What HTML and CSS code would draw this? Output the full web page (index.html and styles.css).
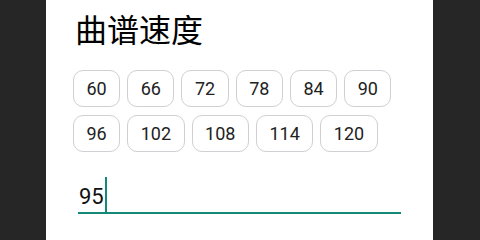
FILE: index.html
```html
<!DOCTYPE html>
<html lang="zh">
<head>
  <meta charset="UTF-8">
  <title>曲谱速度</title>
  <link rel="stylesheet" href="styles.css">
</head>
<body>

<div class="panel">
  <h2 class="title">曲谱速度</h2>

  <div class="speeds">
    <button class="speed">60</button>
    <button class="speed">66</button>
    <button class="speed">72</button>
    <button class="speed">78</button>
    <button class="speed">84</button>
    <button class="speed">90</button>
    <button class="speed">96</button>
    <button class="speed">102</button>
    <button class="speed">108</button>
    <button class="speed">114</button>
    <button class="speed">120</button>
  </div>

  <div class="field">
    <span class="value">95</span><span class="caret"></span>
  </div>
</div>

</body>
</html>
```

FILE: styles.css
```css
:root {
  --dark-bg: #262626;
  --accent: #138a78;
  --border-color: #cfcfd4;
  --text-color: #222;
}

body {
  margin: 0;
  background-color: var(--dark-bg);
  font-family: Roboto, "Noto Sans CJK SC", sans-serif;
  color: var(--text-color);
}

.panel {
  margin-left: 46px;
  width: 387px;
  height: 240px;
  background-color: #fff;
  padding: 0 32px 0 27px;
  box-sizing: border-box;
}

.title {
  margin: 0;
  padding-top: 6px;
  padding-left: 2px;
  font-family: "Noto Sans CJK SC", sans-serif;
  font-size: 32px;
  font-weight: normal;
  line-height: 44px;
  color: #000;
}

.speeds {
  display: flex;
  flex-wrap: wrap;
  gap: 8px 7px;
  margin-top: 20px;
  margin-right: -10px;
}

.speed {
  height: 37px;
  padding: 0 12.5px;
  background-color: #fff;
  border: 1px solid var(--border-color);
  border-radius: 10px;
  font-family: Roboto, sans-serif;
  font-size: 18px;
  color: var(--text-color);
}

.field {
  display: flex;
  align-items: flex-end;
  margin-top: 24px;
  margin-left: 5px;
  height: 38px;
  border-bottom: 2px solid var(--accent);
  box-sizing: border-box;
}

.value {
  font-family: Roboto, sans-serif;
  font-size: 22px;
  color: #111;
  padding-left: 1px;
  padding-bottom: 3px;
}

.caret {
  width: 2px;
  height: 35px;
  margin-left: 1px;
  background-color: var(--accent);
}
```
